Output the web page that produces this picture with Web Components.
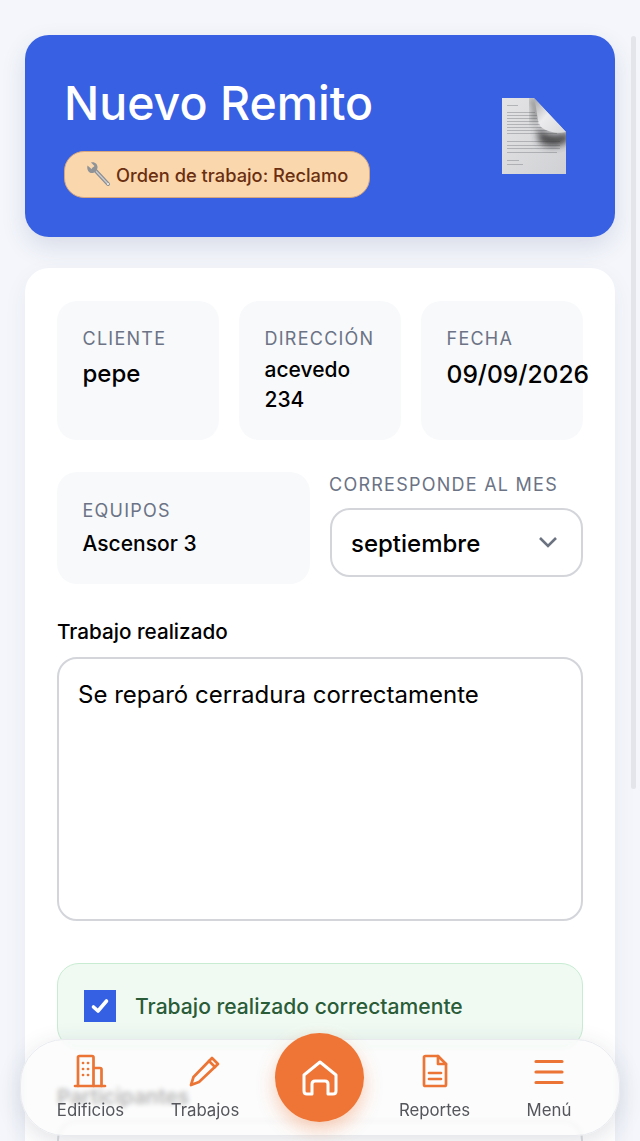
<!DOCTYPE html>
<html lang="es">
<head>
<meta charset="utf-8">
<title>Nuevo Remito</title>
<style>
html, body { margin: 0; height: 1141px; overflow: hidden; }
body { background: #f4f6fb; font-family: Inter, "Liberation Sans", sans-serif; color: #000; }
</style>
</head>
<body>
<remito-page>
  <remito-header slot="top" title="Nuevo Remito" badge="Orden de trabajo: Reclamo"></remito-header>
  <remito-form></remito-form>
</remito-page>
<bottom-nav></bottom-nav>
<page-scrollbar></page-scrollbar>

<script>
class RemitoPage extends HTMLElement {
  constructor() {
    super()
    this.attachShadow({mode: "open"})
    this.shadowRoot.innerHTML = `
    <style>
    :host { display: flex; flex-direction: column; gap: 31px; padding: 35px 25px 0; }
    </style>
    <slot name="top"></slot>
    <slot></slot>`
  }
}

class RemitoHeader extends HTMLElement {
  constructor() {
    super()
    this.attachShadow({mode: "open"})
    this.shadowRoot.innerHTML = `
    <style>
    :host {
      display: flex; justify-content: space-between; align-items: center;
      height: 202px; box-sizing: border-box; padding: 2px 48px 0 39px;
      background: #3760e2; border-radius: 24px;
      box-shadow: 0 10px 24px rgba(50, 70, 120, .14);
    }
    h1 { margin: 0 0 21px; font-size: 46.5px; line-height: 54px; font-weight: 500; color: #fff; }
    .badge {
      display: inline-flex; align-items: center; gap: 4px; box-sizing: border-box;
      height: 47px; padding: 0 20.5px 0 20px; border-radius: 20px;
      background: #fbd7ad; border: 1px solid #d6a67f;
      color: #6a2f10; font-size: 18.3px; font-weight: 500;
    }
    </style>
    <div class="left">
      <h1></h1>
      <span class="badge">
        <svg width="27" height="27" viewBox="0 0 27 27">
          <path d="M9 8 L23 23" stroke="#8a8d92" stroke-width="4" stroke-linecap="round"/>
          <path d="M9 8 L23 23" stroke="#c9cbce" stroke-width="1.4" stroke-linecap="round"/>
          <path d="M2.5 4.5 L6.5 8 L9.5 5 L6 1.5 C9.5 .5 13 3 12.5 7 L11 10.5 L8 12 C4 12.8 1.4 8.6 2.5 4.5 Z" fill="#8f9297"/>
          <circle cx="23" cy="23" r="1" fill="#eee"/>
        </svg>
        <span class="text"></span>
      </span>
    </div>
    <svg width="66" height="78" viewBox="0 0 66 78">
      <defs>
        <linearGradient id="pg" x1="0" y1="0" x2="1" y2="1">
          <stop offset="0" stop-color="#e4e4e6"/><stop offset="1" stop-color="#d0d1d4"/>
        </linearGradient>
        <linearGradient id="fold" x1="0" y1="0" x2="1" y2="1">
          <stop offset="0" stop-color="#a5a5a8"/><stop offset=".45" stop-color="#ececee"/><stop offset="1" stop-color="#d8d8da"/>
        </linearGradient>
        <filter id="soft" x="-40%" y="-40%" width="180%" height="180%"><feGaussianBlur stdDeviation="3.5"/></filter>
        <filter id="ink"><feGaussianBlur stdDeviation=".4"/></filter>
        <clipPath id="pc"><path d="M1 0 H33 L65 34 V76 H1 Z"/></clipPath>
      </defs>
      <path d="M1 0 H33 L65 34 V76 H1 Z" fill="url(#pg)"/>
      <g clip-path="url(#pc)">
        <g fill="#8d8e92" opacity=".55" filter="url(#ink)">
          <rect x="6" y="7" width="11" height="1"/>
          <rect x="6" y="14" width="28" height="1"/><rect x="6" y="17" width="30" height="1"/>
          <rect x="6" y="20" width="30" height="1"/><rect x="6" y="23" width="32" height="1"/>
          <rect x="6" y="26" width="40" height="1"/><rect x="6" y="29" width="46" height="1"/>
          <rect x="6" y="32" width="50" height="1"/><rect x="6" y="35" width="50" height="1"/>
          <rect x="6" y="43" width="53" height="1"/><rect x="6" y="47" width="53" height="1"/>
          <rect x="6" y="50" width="53" height="1"/><rect x="6" y="54" width="50" height="1"/>
          <rect x="6" y="62" width="12" height="1"/><rect x="6" y="66" width="16" height="1"/>
        </g>
        <path d="M36 30 C46 38 56 38 68 34 L68 42 C60 50 46 50 38 44 Z" fill="#37373a" opacity=".9" filter="url(#soft)"/>
        <path d="M30 0 C36 8 36 16 33 24" stroke="#444" stroke-width="7" fill="none" opacity=".55" filter="url(#soft)"/>
      </g>
      <path d="M33 0 L65 34 C58 36 46 34 40 29 C36 24 36 10 33 0 Z" fill="url(#fold)"/>
    </svg>`
    this.shadowRoot.querySelector("h1").textContent = this.getAttribute("title")
    this.shadowRoot.querySelector(".text").textContent = this.getAttribute("badge")
  }
}

class InfoTile extends HTMLElement {
  constructor() {
    super()
    this.attachShadow({mode: "open"})
    this.shadowRoot.innerHTML = `
    <style>
    :host {
      display: block; box-sizing: border-box; min-width: 0;
      padding: var(--tile-top, 26px) 0 0 25.5px; background: #f8f9fb; border-radius: 20px;
    }
    .label { font-size: 18px; line-height: 24px; letter-spacing: 1.25px; color: #6b7385; white-space: nowrap; }
    .value { margin-top: var(--value-gap, 5px); font-size: var(--value-size, 24px); line-height: var(--value-line, 30px); font-weight: var(--value-weight, 550); white-space: pre-line; }
    </style>
    <div class="label"></div>
    <div class="value"><slot></slot></div>`
    this.shadowRoot.querySelector(".label").textContent = this.getAttribute("label")
  }
}

class MonthSelect extends HTMLElement {
  constructor() {
    super()
    this.attachShadow({mode: "open"})
    this.shadowRoot.innerHTML = `
    <style>
    :host { display: block; }
    .label { font-size: 18px; line-height: 24px; letter-spacing: 1.25px; color: #6b7385; white-space: nowrap; margin: 1px 0 11px -1px; }
    .box {
      display: flex; align-items: center; justify-content: space-between;
      height: 69px; box-sizing: border-box; padding: 2px 23px 0 19px;
      background: #fff; border: 2px solid #d3d5da; border-radius: 20px;
      font-size: 24px; font-weight: 550;
    }
    svg { margin-top: -4px; }
    </style>
    <div class="label"><slot name="label"></slot></div>
    <div class="box">
      <slot></slot>
      <svg width="20" height="12" viewBox="0 0 20 12"><path d="M2 2 L10 10 L18 2" fill="none" stroke="#6b7280" stroke-width="2.6"/></svg>
    </div>`
  }
}

class WorkDone extends HTMLElement {
  constructor() {
    super()
    this.attachShadow({mode: "open"})
    this.shadowRoot.innerHTML = `
    <style>
    :host { display: block; }
    .label { font-size: 20.7px; line-height: 26px; font-weight: 550; margin-bottom: 12px; }
    .area {
      height: 264px; box-sizing: border-box; padding: 20px 19px;
      background: #fff; border: 2px solid #d3d5da; border-radius: 20px;
      font-size: 24px; line-height: 32px;
    }
    </style>
    <div class="label"><slot name="label"></slot></div>
    <div class="area"><slot></slot></div>`
  }
}

class CheckRow extends HTMLElement {
  constructor() {
    super()
    this.attachShadow({mode: "open"})
    this.shadowRoot.innerHTML = `
    <style>
    :host {
      display: flex; align-items: center; gap: 19px; box-sizing: border-box;
      height: 86px; padding: 0 26px;
      background: #f0faf3; border: 1.5px solid #c8ecd2; border-radius: 22px;
      color: #2a5c38; font-size: 21.1px; font-weight: 500;
    }
    .box { width: 32px; height: 32px; background: #3560e3; display: flex; align-items: center; justify-content: center; flex: none; margin-top: -1px; }
    </style>
    <span class="box"><svg width="20" height="18" viewBox="0 0 20 18"><path d="M3.5 10 L8 14 L16.5 4" fill="none" stroke="#fff" stroke-width="3.6" stroke-linecap="round" stroke-linejoin="round"/></svg></span>
    <span><slot></slot></span>`
  }
}

class RemitoForm extends HTMLElement {
  constructor() {
    super()
    this.attachShadow({mode: "open"})
    this.shadowRoot.innerHTML = `
    <style>
    :host {
      display: flex; flex-direction: column;
      box-sizing: border-box; height: 1000px; padding: 33px 32px 0;
      background: #fff; border-radius: 24px;
      box-shadow: 0 8px 24px rgba(50, 70, 120, .06);
    }
    .row3 { display: grid; grid-template-columns: repeat(3, 162px); gap: 20px; height: 139px; }
    .row2 { display: grid; grid-template-columns: 253px 253px; gap: 20px; margin-top: 32px; }
    .row2 info-tile { height: 112px; --tile-top: 27px; --value-size: 21px; --value-gap: 6px; --value-weight: 500; }
    .cli { --value-gap: 8px; }
    .dir { --value-size: 21px; --value-gap: 4px; }
    .fecha { --value-size: 24.6px; --value-weight: 500; --value-gap: 8px; }
    work-done { margin-top: 35px; }
    check-row { margin-top: 42px; }
    .participantes { margin-top: 35px; font-size: 20.7px; line-height: 26px; font-weight: 600; }
    .next { height: 90px; margin-top: 10px; border: 2px solid #dcdee2; border-radius: 20px; }
    </style>
    <div class="row3">
      <info-tile label="CLIENTE" class="cli">pepe</info-tile>
      <info-tile label="DIRECCIÓN" class="dir">acevedo
234</info-tile>
      <info-tile label="FECHA" class="fecha">09/09/2026</info-tile>
    </div>
    <div class="row2">
      <info-tile label="EQUIPOS">Ascensor 3</info-tile>
      <month-select><span slot="label">CORRESPONDE AL MES</span>septiembre</month-select>
    </div>
    <work-done><span slot="label">Trabajo realizado</span>Se reparó cerradura correctamente</work-done>
    <check-row>Trabajo realizado correctamente</check-row>
    <div class="participantes">Participantes</div>
    <div class="next"></div>`
  }
}

class NavItem extends HTMLElement {
  constructor() {
    super()
    this.attachShadow({mode: "open"})
    this.shadowRoot.innerHTML = `
    <style>
    :host { display: flex; flex-direction: column; align-items: center; justify-content: flex-start; color: #54565c; font-size: 16.8px; line-height: 20px; }
    .icon { height: 36px; display: flex; align-items: flex-end; justify-content: center; margin-bottom: 12px; }
    </style>
    <div class="icon"><slot name="icon"></slot></div>
    <div><slot></slot></div>`
  }
}

class BottomNav extends HTMLElement {
  constructor() {
    super()
    this.attachShadow({mode: "open"})
    const st = 'fill="none" stroke="#ec7434" stroke-width="2.7" stroke-linejoin="round" stroke-linecap="round"'
    this.shadowRoot.innerHTML = `
    <style>
    :host {
      position: fixed; left: 20px; top: 1039px; width: 600px; height: 97px;
      box-sizing: border-box; border-radius: 44px;
      background: rgba(251, 251, 251, .72); border: 1px solid #e8eaee;
      -webkit-backdrop-filter: blur(2.5px); backdrop-filter: blur(2.5px);
      box-shadow: 0 6px 24px rgba(40, 50, 80, .14);
      display: grid; grid-template-columns: 127px 102px 127px 103px 126px; padding: 12px 0 0 6px;
    }
    .home {
      width: 89px; height: 89px; border-radius: 50%; background: #ee7535;
      margin: -19px auto 0; display: flex; align-items: center; justify-content: center;
      box-shadow: 0 8px 18px rgba(238, 117, 53, .35);
    }
    </style>
    <nav-item>
      <svg slot="icon" width="38" height="34" viewBox="0 0 38 34" ${st} style="margin-left:-2px">
        <path d="M4 32 H34"/>
        <path d="M7 32 V3.5 Q7 2 8.5 2 H21 Q22.5 2 22.5 3.5 V32"/>
        <path d="M23 14 H29 Q30.5 14 30.5 15.5 V32"/>
        <path d="M12 9h.1M17 9h.1M12 15h.1M17 15h.1M12 21h.1M17 21h.1"/>
      </svg>
      Edificios
    </nav-item>
    <nav-item>
      <svg slot="icon" width="34" height="34" viewBox="0 0 34 34" ${st}>
        <path d="M24 4 L30 10 L11 28 L3 31 L5.5 23 Z"/>
        <path d="M21 7 L27 13"/>
      </svg>
      Trabajos
    </nav-item>
    <div class="home">
      <svg width="38" height="36" viewBox="0 0 38 36" fill="none" stroke="#fff" stroke-width="3" stroke-linejoin="round" stroke-linecap="round">
        <path d="M3 15 L19 2 L35 15 V31 Q35 34 32 34 H27 V24 Q27 21 24 21 H14 Q11 21 11 24 V34 H6 Q3 34 3 31 Z"/>
      </svg>
    </div>
    <nav-item>
      <svg slot="icon" width="26" height="34" viewBox="0 0 26 34" ${st}>
        <path d="M2 3.5 Q2 2 3.5 2 H16 L24 10 V30.5 Q24 32 22.5 32 H3.5 Q2 32 2 30.5 Z"/>
        <path d="M16 2 V10 H24"/>
        <path d="M7 19 H19 M7 25 H19"/>
      </svg>
      Reportes
    </nav-item>
    <nav-item>
      <svg slot="icon" width="30" height="26" viewBox="0 0 30 26" fill="none" stroke="#ec7434" stroke-width="3.2" stroke-linecap="round" style="margin-bottom:3px">
        <path d="M2 2.5 H28 M2 13 H28 M2 23.5 H28"/>
      </svg>
      Menú
    </nav-item>`
  }
}

class PageScrollbar extends HTMLElement {
  constructor() {
    super()
    this.attachShadow({mode: "open"})
    this.shadowRoot.innerHTML = `
    <style>
    :host { position: fixed; left: 631px; top: 36px; width: 5px; height: 753px; background: #e3e5ea; border-radius: 3px; }
    </style>`
  }
}

customElements.define("remito-page", RemitoPage)
customElements.define("remito-header", RemitoHeader)
customElements.define("info-tile", InfoTile)
customElements.define("month-select", MonthSelect)
customElements.define("work-done", WorkDone)
customElements.define("check-row", CheckRow)
customElements.define("remito-form", RemitoForm)
customElements.define("nav-item", NavItem)
customElements.define("bottom-nav", BottomNav)
customElements.define("page-scrollbar", PageScrollbar)
</script>
</body>
</html>
